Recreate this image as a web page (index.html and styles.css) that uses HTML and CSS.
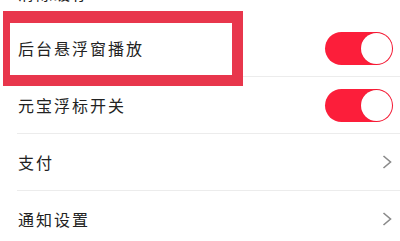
FILE: index.html
```html
<!DOCTYPE html>
<html lang="zh">
<head>
<meta charset="utf-8">
<link rel="stylesheet" href="styles.css">
</head>
<body>
<div class="screen">
  <div class="list">
    <div class="row row-top">
      <span class="label">清除缓存</span>
      <span class="value">12.5M</span>
    </div>
    <div class="row">
      <span class="label">后台悬浮窗播放</span>
      <span class="toggle on"><span class="knob"></span></span>
    </div>
    <div class="row">
      <span class="label">元宝浮标开关</span>
      <span class="toggle on"><span class="knob"></span></span>
    </div>
    <div class="row">
      <span class="label">支付</span>
      <svg class="chevron" width="10" height="14" viewBox="0 0 10 14"><path d="M1.5 1 L8.5 7 L1.5 13" fill="none" stroke="#8a8a8a" stroke-width="1.6"/></svg>
    </div>
    <div class="row">
      <span class="label">通知设置</span>
      <svg class="chevron" width="10" height="14" viewBox="0 0 10 14"><path d="M1.5 1 L8.5 7 L1.5 13" fill="none" stroke="#8a8a8a" stroke-width="1.6"/></svg>
    </div>
  </div>
  <div class="highlight"></div>
</div>
</body>
</html>
```
FILE: styles.css
```css
* { box-sizing: border-box; }
html, body {
  margin: 0;
  padding: 0;
  background: #ffffff;
}
body {
  width: 400px;
  height: 241px;
  overflow: hidden;
  font-family: "Noto Sans CJK SC", "Noto Sans", sans-serif;
}
.screen {
  position: relative;
  width: 400px;
  height: 241px;
  overflow: hidden;
}
.list {
  margin-top: -37px;
  margin-left: 17px;
}
.row {
  height: 57px;
  display: flex;
  align-items: center;
  justify-content: space-between;
  border-bottom: 1px solid #ececec;
  padding-right: 7px;
}
.row-top {
  padding-top: 2px;
  border-bottom: none;
}
.row-top .value {
  color: #c4c4c4;
  margin-right: 170px;
  font-size: 15px;
}
.label {
  font-size: 16px;
  letter-spacing: 2px;
  color: #222;
  padding-left: 1px;
}
.toggle {
  width: 68px;
  height: 33px;
  border-radius: 17px;
  background: #fc1e3a;
  display: flex;
  align-items: center;
  justify-content: flex-end;
  padding: 1px;
}
.knob {
  width: 31px;
  height: 31px;
  border-radius: 50%;
  background: #fff;
  box-shadow: 0 0 0 0.5px rgba(200, 0, 20, 0.3);
}
.chevron {
  margin-right: 1px;
}
.highlight {
  position: absolute;
  left: 3px;
  top: 11px;
  width: 240px;
  height: 75px;
  border-style: solid;
  border-color: #e8364c;
  border-width: 12px 11px 11px 7px;
}
```
